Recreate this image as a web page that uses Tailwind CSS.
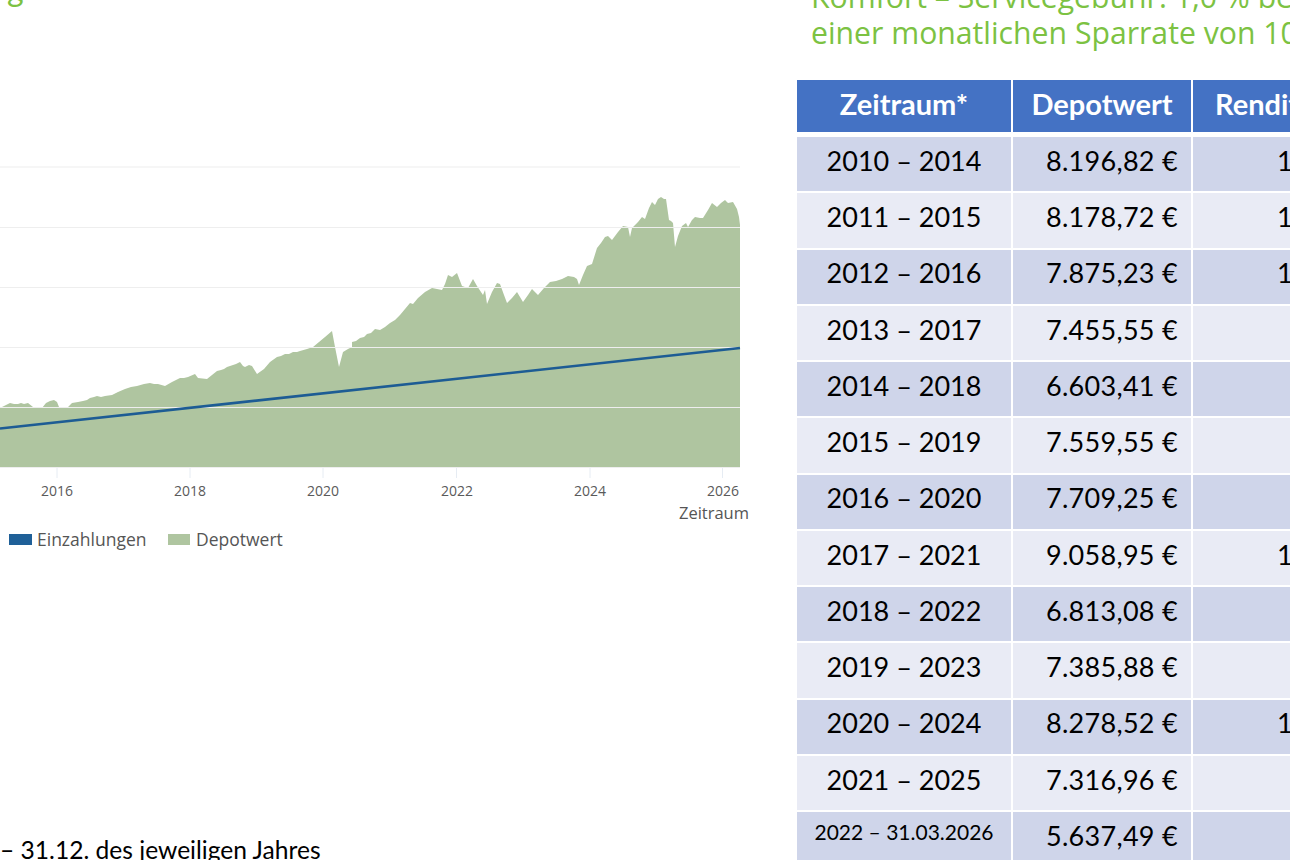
<!DOCTYPE html>
<html lang="de">
<head>
  <meta charset="UTF-8">
  <meta name="viewport" content="width=device-width, initial-scale=1.0">
  <title>Sparplan Depotwert</title>
  <script src="https://cdn.jsdelivr.net/npm/@tailwindcss/browser@4"></script>
</head>
<body class="bg-white">
  <div class="flex w-[1290px] h-[860px] overflow-hidden bg-white font-['Lato','Liberation_Sans',sans-serif]">

    <!-- linke Seite: Titelrest, Chart, Fussnote -->
    <div class="w-[797px] shrink-0 flex flex-col">
      <div class="h-[160px] shrink-0 -mt-[27px] pl-[7px] text-[32px] leading-[32px] text-[#7cc242]">g</div>
      <svg class="block w-[797px] h-[400px] mt-[22px] shrink-0" viewBox="0 155 797 400" font-family="Open Sans, Liberation Sans, sans-serif">
        <!-- Depotwert -->
        <polygon fill="#afc5a0" points="0,408 2,407 6,405 10,403 14,404 18,404 21,403 24,404 28,403 33,407 42,408 46,403 50,401 54,400 57,402 59,407 67,408 72,403 78,402 83,401 87,400 90,398 94,397 97,396 101,397 105,396 112,395 118,392 125,389 131,387 137,386 144,384 150,383 154,384 158,384 165,386 172,382 176,380 180,378 184,378 188,377 195,374 198,378 207,379 212,375 217,371 221,370 224,369 227,367 230,366 236,364 240,362 243,366 245,367 249,365 252,366 257,374 264,369 270,362 277,357 281,356 285,354 289,354 293,352 297,352 300,351 307,349 313,347 319,342 325,337 332,331 335,347 339,367 343,352 348,349 352,347 352,342 356,341 360,338 364,337 367,334 371,333 375,329 380,330 385,327 390,323 395,320 400,315 405,309 410,303 413,304 418,298 425,292 432,288 437,289 442,290 445,284 448,275 452,277 457,273 462,286 468,288 473,279 477,286 483,295 485,290 487,304 492,292 497,283 500,284 504,295 507,303 512,298 517,292 523,302 528,295 532,289 538,295 544,288 550,282 556,281 562,279 568,276 574,277 577,279 579,285 583,275 587,266 592,264 597,248 601,243 605,237 608,236 612,240 618,232 623,226 628,227 630,237 632,228 638,222 642,217 645,219 649,208 652,202 655,205 658,199 661,197 664,199 666,199 669,220 671,221 673,223 675,247 678,236 682,226 686,223 688,227 692,220 695,217 700,218 703,218 708,210 712,203 717,207 721,203 725,200 728,203 733,202 737,209 739,217 740,225 740,467 0,467"/>
        <!-- Gitterlinien -->
        <g stroke="#eeeeee" stroke-width="1.2">
          <line x1="0" y1="167" x2="740" y2="167"/>
          <line x1="0" y1="227.5" x2="740" y2="227.5"/>
          <line x1="0" y1="287.5" x2="740" y2="287.5"/>
          <line x1="0" y1="347.5" x2="740" y2="347.5"/>
          <line x1="0" y1="407.5" x2="740" y2="407.5"/>
          <line x1="0" y1="467.5" x2="740" y2="467.5"/>
        </g>
        <g stroke="#e6ecf3" stroke-width="1">
          <line x1="57" y1="468" x2="57" y2="478"/>
          <line x1="190" y1="468" x2="190" y2="478"/>
          <line x1="323" y1="468" x2="323" y2="478"/>
          <line x1="456.5" y1="468" x2="456.5" y2="478"/>
          <line x1="590" y1="468" x2="590" y2="478"/>
          <line x1="722.5" y1="468" x2="722.5" y2="478"/>
        </g>
        <!-- Einzahlungen -->
        <line x1="0" y1="428.5" x2="740" y2="348" stroke="#1d5c94" stroke-width="2.6"/>
        <g fill="#5a5a5a" font-size="14" text-anchor="middle">
          <text x="57" y="496">2016</text>
          <text x="190" y="496">2018</text>
          <text x="323" y="496">2020</text>
          <text x="457" y="496">2022</text>
          <text x="590" y="496">2024</text>
          <text x="723" y="496">2026</text>
        </g>
        <text x="749" y="519" fill="#555555" font-size="16.5" text-anchor="end">Zeitraum</text>
        <rect x="9" y="534" width="23" height="11" fill="#1f6098"/>
        <text x="37" y="546" fill="#555555" font-size="17.5">Einzahlungen</text>
        <rect x="168" y="534" width="22" height="11" fill="#afc5a0"/>
        <text x="196" y="546" fill="#555555" font-size="17.5">Depotwert</text>
      </svg>
      <p class="mt-[280px] shrink-0 text-[24.6px] leading-[30px] text-black whitespace-nowrap font-['Lato',sans-serif]">– 31.12. des jeweiligen Jahres</p>
    </div>

    <!-- rechte Seite: Ueberschrift und Tabelle -->
    <div class="flex-1 min-w-0">
      <div class="-mt-[21px] ml-[14px] text-[30.2px] leading-[36px] text-[#7cc242] whitespace-nowrap font-['Open_Sans',sans-serif]">
        <div>Komfort – Servicegebühr: 1,0 % bei</div>
        <div>einer monatlichen Sparrate von 100 €</div>
      </div>
      <table class="table-fixed w-[620px] mt-[27px] -ml-[2px] border-separate border-spacing-[2px] text-[27px] text-black">
        <colgroup>
          <col class="w-[214px]">
          <col class="w-[178px]">
          <col>
        </colgroup>
        <thead>
          <tr class="h-[52px] text-white text-[29px]">
            <th class="bg-[#4472c4] font-bold text-center pb-[4px]">Zeitraum*</th>
            <th class="bg-[#4472c4] font-bold text-center pb-[4px]">Depotwert</th>
            <th class="bg-[#4472c4] font-bold text-left pl-[22px] pb-[4px]">Rendite</th>
          </tr>
          <tr class="h-[1px]"></tr>
        </thead>
        <tbody class="text-center">
          <tr class="h-[54.25px]"><td class="bg-[#cfd5ea] pb-[6px]">2010 – 2014</td><td class="bg-[#cfd5ea] pb-[6px] text-right pr-[13px] tracking-[0.3px]">8.196,82 €</td><td class="bg-[#cfd5ea] pb-[6px] text-left pl-[84px]">1</td></tr>
          <tr class="h-[54.25px]"><td class="bg-[#e9ebf5] pb-[6px]">2011 – 2015</td><td class="bg-[#e9ebf5] pb-[6px] text-right pr-[13px] tracking-[0.3px]">8.178,72 €</td><td class="bg-[#e9ebf5] pb-[6px] text-left pl-[84px]">1</td></tr>
          <tr class="h-[54.25px]"><td class="bg-[#cfd5ea] pb-[6px]">2012 – 2016</td><td class="bg-[#cfd5ea] pb-[6px] text-right pr-[13px] tracking-[0.3px]">7.875,23 €</td><td class="bg-[#cfd5ea] pb-[6px] text-left pl-[84px]">1</td></tr>
          <tr class="h-[54.25px]"><td class="bg-[#e9ebf5] pb-[6px]">2013 – 2017</td><td class="bg-[#e9ebf5] pb-[6px] text-right pr-[13px] tracking-[0.3px]">7.455,55 €</td><td class="bg-[#e9ebf5]"></td></tr>
          <tr class="h-[54.25px]"><td class="bg-[#cfd5ea] pb-[6px]">2014 – 2018</td><td class="bg-[#cfd5ea] pb-[6px] text-right pr-[13px] tracking-[0.3px]">6.603,41 €</td><td class="bg-[#cfd5ea]"></td></tr>
          <tr class="h-[54.25px]"><td class="bg-[#e9ebf5] pb-[6px]">2015 – 2019</td><td class="bg-[#e9ebf5] pb-[6px] text-right pr-[13px] tracking-[0.3px]">7.559,55 €</td><td class="bg-[#e9ebf5]"></td></tr>
          <tr class="h-[54.25px]"><td class="bg-[#cfd5ea] pb-[6px]">2016 – 2020</td><td class="bg-[#cfd5ea] pb-[6px] text-right pr-[13px] tracking-[0.3px]">7.709,25 €</td><td class="bg-[#cfd5ea]"></td></tr>
          <tr class="h-[54.25px]"><td class="bg-[#e9ebf5] pb-[6px]">2017 – 2021</td><td class="bg-[#e9ebf5] pb-[6px] text-right pr-[13px] tracking-[0.3px]">9.058,95 €</td><td class="bg-[#e9ebf5] pb-[6px] text-left pl-[84px]">1</td></tr>
          <tr class="h-[54.25px]"><td class="bg-[#cfd5ea] pb-[6px]">2018 – 2022</td><td class="bg-[#cfd5ea] pb-[6px] text-right pr-[13px] tracking-[0.3px]">6.813,08 €</td><td class="bg-[#cfd5ea]"></td></tr>
          <tr class="h-[54.25px]"><td class="bg-[#e9ebf5] pb-[6px]">2019 – 2023</td><td class="bg-[#e9ebf5] pb-[6px] text-right pr-[13px] tracking-[0.3px]">7.385,88 €</td><td class="bg-[#e9ebf5]"></td></tr>
          <tr class="h-[54.25px]"><td class="bg-[#cfd5ea] pb-[6px]">2020 – 2024</td><td class="bg-[#cfd5ea] pb-[6px] text-right pr-[13px] tracking-[0.3px]">8.278,52 €</td><td class="bg-[#cfd5ea] pb-[6px] text-left pl-[84px]">1</td></tr>
          <tr class="h-[54.25px]"><td class="bg-[#e9ebf5] pb-[6px]">2021 – 2025</td><td class="bg-[#e9ebf5] pb-[6px] text-right pr-[13px] tracking-[0.3px]">7.316,96 €</td><td class="bg-[#e9ebf5]"></td></tr>
          <tr class="h-[54.25px]"><td class="bg-[#cfd5ea] pb-[14px] text-[21px]">2022 – 31.03.2026</td><td class="bg-[#cfd5ea] pb-[6px] text-right pr-[13px] tracking-[0.3px]">5.637,49 €</td><td class="bg-[#cfd5ea]"></td></tr>
        </tbody>
      </table>
    </div>
  </div>
</body>
</html>
